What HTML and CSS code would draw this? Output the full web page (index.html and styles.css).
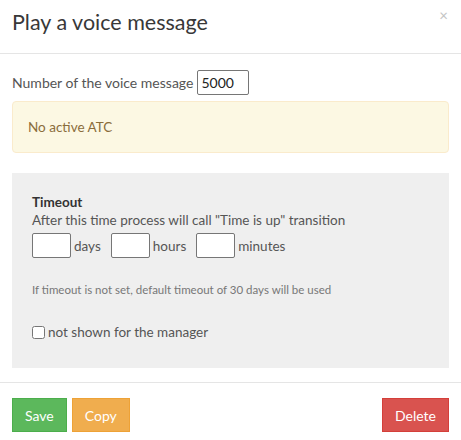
FILE: index.html
```html
<!DOCTYPE html>
<html lang="en">
<head>
  <meta charset="UTF-8">
  <title>Play a voice message</title>
  <link rel="stylesheet" href="styles.css">
</head>
<body>

  <div class="modal">
    <div class="modal-header">
      <h4 class="modal-title">Play a voice message</h4>
      <span class="close">&times;</span>
    </div>

    <div class="modal-body">
      <div class="field">
        <label for="msgNumber">Number of the voice message</label>
        <input type="text" id="msgNumber" class="num-input" value="5000" />
      </div>

      <div class="alert">No active ATC</div>

      <!-- Timeout settings -->
      <div class="panel">
        <div class="panel-title">Timeout</div>
        <div class="panel-desc">After this time process will call "Time is up" transition</div>
        <div class="timeout-row">
          <input type="text" class="small-input" /> <span>days</span>
          <input type="text" class="small-input" /> <span>hours</span>
          <input type="text" class="small-input" /> <span>minutes</span>
        </div>
        <p class="hint">If timeout is not set, default timeout of 30 days will be used</p>
        <label class="check"><input type="checkbox" /> not shown for the manager</label>
      </div>
    </div>

    <div class="modal-footer">
      <button class="btn btn-save">Save</button>
      <button class="btn btn-copy">Copy</button>
      <button class="btn btn-delete">Delete</button>
    </div>
  </div>

</body>
</html>
```

FILE: styles.css
```css
body {
  margin: 0;
  font-family: Lato, "Open Sans", sans-serif;
  font-size: 13.5px;
  color: #555;
  background: #fff;
}

.modal { width: 461px; }

.modal-header {
  position: relative;
  height: 53px;
  padding: 0 12px;
  border-bottom: 1px solid #e5e5e5;
}
.modal-title {
  margin: 0;
  padding-top: 8px;
  font-size: 21.5px;
  font-weight: normal;
  line-height: 28px;
  color: #383838;
}
.close {
  position: absolute;
  top: 6px;
  right: 13px;
  font-size: 15px;
  color: #c4c4c4;
}

.modal-body { padding: 16px 12px 14px; }

.field {
  display: flex;
  align-items: center;
  gap: 4px;
}
.field label { font-size: 14px; }
.num-input {
  width: 52px;
  height: 25px;
  box-sizing: border-box;
  padding: 2px 3px;
  border: 1px solid #767676;
  border-radius: 2px;
  font: inherit;
  font-size: 14px;
  color: #222;
}

.alert {
  margin-top: 6px;
  padding: 15px;
  line-height: 20px;
  background: #fcf8e3;
  border: 1px solid #faebcc;
  border-radius: 4px;
  color: #8a6d3b;
}

.panel {
  margin-top: 20px;
  padding: 20px 20px 26px;
  background: #efefef;
}
.panel-title {
  font-weight: bold;
  color: #333;
  line-height: 18px;
}
.panel-desc { line-height: 18px; }
.timeout-row {
  display: flex;
  align-items: center;
  gap: 3px;
  margin-top: 4px;
}
.timeout-row span { margin-right: 7px; }
.small-input {
  width: 39px;
  height: 25px;
  box-sizing: border-box;
  border: 1px solid #767676;
  border-radius: 2px;
  background: #fff;
}
.hint {
  margin: 24px 0 0;
  font-size: 11.5px;
  line-height: 16px;
  color: #777;
}
.check {
  display: flex;
  align-items: center;
  gap: 3px;
  margin-top: 24px;
  line-height: 20px;
}
.check input { margin: 0; width: 13px; height: 13px; }

.modal-footer {
  display: flex;
  gap: 5px;
  padding: 15px 12px;
  border-top: 1px solid #e5e5e5;
}
.btn {
  height: 34px;
  padding: 0 12px;
  border: 1px solid transparent;
  font: inherit;
  font-size: 14px;
  color: #fff;
  cursor: pointer;
}
.btn-save { background: #5cb85c; border-color: #4cae4c; }
.btn-copy { background: #f0ad4e; border-color: #eea236; }
.btn-delete { background: #d9534f; border-color: #d43f3a; margin-left: auto; }
```
